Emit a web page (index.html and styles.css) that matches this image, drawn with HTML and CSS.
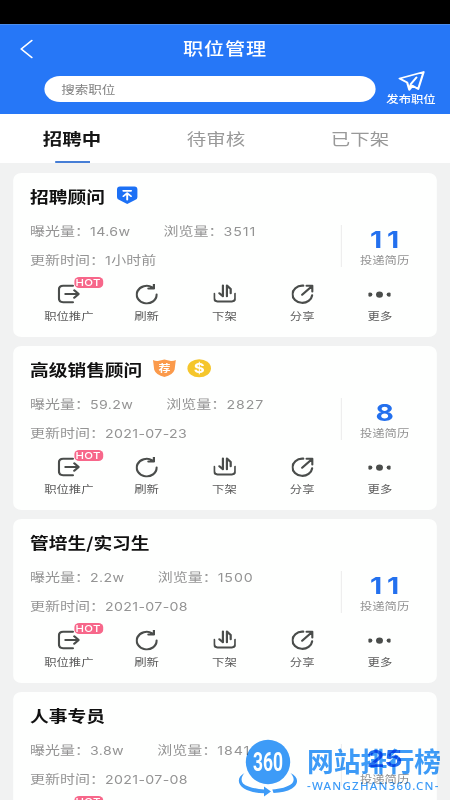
FILE: index.html
```html
<!DOCTYPE html>
<html lang="zh-CN">
<head>
<meta charset="utf-8">
<title>职位管理</title>
<link rel="stylesheet" href="styles.css">
</head>
<body>
<svg class="defs" aria-hidden="true">
  <symbol id="promote" viewBox="0 0 20 20" preserveAspectRatio="none"><path d="M13.800 1.800H5Q1.200 1.800 1.200 5.500v8.500q0 3.800 3.800 3.800h8.800M7 9.800h11.500M15 6.200l4 3.600-4 3.600"/></symbol>
  <symbol id="refresh" viewBox="0 0 20 20" preserveAspectRatio="none"><path d="M19 10.300A9 8.600 0 1 1 15 3.200M11.500 4.300h5V.3"/></symbol>
  <symbol id="offline" viewBox="0 0 20 20" preserveAspectRatio="none"><path d="M.5 9.500v4.500q0 3 3 3h13q3 0 3-3V9.500M8.400 1.500v10.500L5.200 9M12 12V1.500l3.400 3.400V9"/></symbol>
  <symbol id="share" viewBox="0 0 20 20" preserveAspectRatio="none"><path d="M10.500 1.600H9.500A8.900 8.400 0 1 0 18.500 11M9.500 10.500L18 2.500M13.500 1.800h5.200v5.500"/></symbol>
  <symbol id="more" viewBox="0 0 20 20" preserveAspectRatio="none"><g fill="currentColor" stroke="none"><circle cx="1.500" cy="10.300" r="2.100"/><circle cx="10" cy="10.300" r="3.100"/><circle cx="18.500" cy="10.300" r="2.100"/></g></symbol>
</svg>
<div class="screen">
  <div class="app">
    <div class="status"></div>
    <header class="header">
      <div class="bar">
        <svg class="back" viewBox="0 0 10 18"><path d="M9.500 .5L.7 9l8.800 8.500"/></svg>
        <h1>职位管理</h1>
      </div>
      <div class="searchrow">
        <div class="search">搜索职位</div>
        <div class="publish">
          <svg viewBox="0 0 22 20"><path d="M1 7.500L21 1l-4.500 17-4.700-3.300-2.700 4-1.800-7.200zM9.400 17.500l1-4.500L15 6.500"/></svg>
          <span>发布职位</span>
        </div>
      </div>
    </header>
    <nav class="tabs"><span class="active">招聘中</span><span>待审核</span><span>已下架</span></nav>
    <main class="list">
      <article class="card">
        <h2>招聘顾问<svg class="tag top" viewBox="0 0 18 19" preserveAspectRatio="none"><path fill="#1c70f5" d="M3 .5h12q2.500 0 2.500 3v8q0 2-2 3L9 18.500l-6.500-4q-2-1-2-3v-8q0-3 2.500-3z"/><path class="line" d="M5.700 5h6.600M9 14V8M5.800 10.500L9 7.300l3.200 3.200"/></svg></h2>
        <div class="info"><div class="meta"><p>曝光量：<b>14.6w</b><span class="views">浏览量：<b>3511</b></span></p><p>更新时间：<b>1</b>小时前</p></div><div class="count"><strong class="wide">11</strong><span>投递简历</span></div></div>
        <div class="actions"><div><svg><use href="#promote"/></svg><i>HOT</i><span>职位推广</span></div><div><svg><use href="#refresh"/></svg><span>刷新</span></div><div><svg><use href="#offline"/></svg><span>下架</span></div><div><svg><use href="#share"/></svg><span>分享</span></div><div><svg><use href="#more"/></svg><span>更多</span></div></div>
      </article>
      <article class="card">
        <h2>高级销售顾问<svg class="tag shield" viewBox="0 0 20 19" preserveAspectRatio="none"><path fill="#fb9a4b" d="M.5 1q2.500 1.500 5 .7L10 .5l4.500 1.200q2.500.8 5-.7l-1 10Q17 16.500 10 18.500 3 16.500 1.500 11z"/><text x="10" y="13">荐</text></svg><svg class="tag coin" viewBox="0 0 20 19" preserveAspectRatio="none"><ellipse cx="10" cy="9.500" rx="9.800" ry="9.300" fill="#f5c62c"/><text x="10" y="14.500">$</text></svg></h2>
        <div class="info"><div class="meta"><p>曝光量：<b>59.2w</b><span class="views">浏览量：<b>2827</b></span></p><p>更新时间：<b>2021-07-23</b></p></div><div class="count"><strong>8</strong><span>投递简历</span></div></div>
        <div class="actions"><div><svg><use href="#promote"/></svg><i>HOT</i><span>职位推广</span></div><div><svg><use href="#refresh"/></svg><span>刷新</span></div><div><svg><use href="#offline"/></svg><span>下架</span></div><div><svg><use href="#share"/></svg><span>分享</span></div><div><svg><use href="#more"/></svg><span>更多</span></div></div>
      </article>
      <article class="card">
        <h2>管培生/实习生</h2>
        <div class="info"><div class="meta"><p>曝光量：<b>2.2w</b><span class="views">浏览量：<b>1500</b></span></p><p>更新时间：<b>2021-07-08</b></p></div><div class="count"><strong class="wide">11</strong><span>投递简历</span></div></div>
        <div class="actions"><div><svg><use href="#promote"/></svg><i>HOT</i><span>职位推广</span></div><div><svg><use href="#refresh"/></svg><span>刷新</span></div><div><svg><use href="#offline"/></svg><span>下架</span></div><div><svg><use href="#share"/></svg><span>分享</span></div><div><svg><use href="#more"/></svg><span>更多</span></div></div>
      </article>
      <article class="card">
        <h2>人事专员</h2>
        <div class="info"><div class="meta"><p>曝光量：<b>3.8w</b><span class="views">浏览量：<b>1841</b></span></p><p>更新时间：<b>2021-07-08</b></p></div><div class="count"><strong>25</strong><span>投递简历</span></div></div>
        <div class="actions"><div><svg><use href="#promote"/></svg><i>HOT</i></div></div>
      </article>
    </main>
  </div>
  <div class="watermark">
    <svg viewBox="0 0 60 60">
      <circle cx="30" cy="24" r="22.200" fill="#3d9bf8"/>
      <path fill="#3d9bf8" d="M6.500 35C-1 39-1 46 6 50.500c6 3.500 13 4.500 20 4.700v3.300l7-5-7-5v3C18 51 9 49 5 45.500 2.500 42 3.500 38.500 6.500 35zM52.500 35c8.500 4 8.500 11 1.500 15.500-5 3-11 4.200-18.500 4.500l-1.200-3.500C42 51 50 49 54 45.500c3-3.500 1.500-7-1.500-10.500z"/>
      <text x="30" y="33" textLength="30" lengthAdjust="spacingAndGlyphs">360</text>
    </svg>
    <div class="brand"><div class="name">网站排行榜</div><div class="site">-WANGZHAN360.CN-</div></div>
  </div>
</div>
</body>
</html>
```
FILE: styles.css
```css
* { box-sizing: border-box; margin: 0; padding: 0; }
body { background: #f1f2f2; font-family: "Noto Sans CJK SC", sans-serif; }
.defs { position: absolute; width: 0; height: 0; }
.screen { position: relative; width: 450px; height: 800px; overflow: hidden; }
/* 375-unit wide layout, widened to fill the screen */
.app { width: 375px; height: 800px; transform: scaleX(1.2); transform-origin: 0 0; overflow: hidden; background: #f1f2f2; }
svg { fill: none; stroke: currentColor; stroke-linecap: round; stroke-linejoin: round; overflow: visible; display: block; }

.status { height: 24px; background: #000; }
.header { height: 89.5px; background: #2677f7; color: #fff; border-top: 1px solid #4b8eed; }
.bar { display: grid; grid-template-columns: 60px 1fr 60px; align-items: center; height: 47px; }
.back { width: 10px; height: 18px; margin-left: 17px; stroke-width: 1.5; }
h1 { font-size: 16.8px; font-weight: 500; letter-spacing: .7px; line-height: 24px; margin-top: -2px; text-align: center; }
.searchrow { display: flex; padding-left: 36.5px; }
.search { width: 276px; height: 26px; margin-top: 4px; padding-left: 14.5px; border-radius: 13px; background: #fff; color: #808080; font-size: 11.3px; line-height: 26px; }
.publish { width: 62px; display: flex; flex-direction: column; align-items: center; margin-left: -1px; }
.publish svg { width: 22px; height: 20px; stroke-width: 1.8; margin-top: -1px; }
.publish span { font-size: 10.3px; font-weight: 500; line-height: 16px; }

.tabs { height: 49.5px; display: grid; grid-template-columns: repeat(3, 120px); background: #fff; color: #999; font-size: 16.2px; line-height: 49px; text-align: center; }
.tabs .active { color: #161616; font-weight: 700; position: relative; }
.tabs .active::after { content: ""; position: absolute; left: 46px; bottom: 0; width: 28.5px; height: 2px; background: #467ed6; }

.list { padding: 10px 11px 0; display: grid; gap: 9px; }
.card { height: 164px; width: 353px; background: #fefffe; border-radius: 7px; padding: 13px 0 0 14px; }
h2 { height: 20px; display: flex; align-items: center; font-size: 15.6px; font-weight: 700; color: #111; line-height: 20px; }
.tag { height: 18.5px; flex: none; stroke: none; }
.tag.top { width: 18px; margin: -1px 0 0 9.5px; }
.tag .line { stroke: #fff; stroke-width: 1.6; }
.tag.shield { width: 20px; margin-left: 8.5px; margin-top: -1px; }
.tag.coin { width: 20px; margin-left: 8.5px; margin-top: -1px; }
.tag text { fill: #fff; text-anchor: middle; font-weight: 700; font-size: 10px; }
.tag.coin text { font-size: 14px; font-family: Inter, sans-serif; }

.info { display: flex; height: 68.5px; padding-top: 9.5px; }
.meta { width: 259px; color: #949494; font-size: 12.5px; line-height: 29px; white-space: nowrap; }
.meta p { height: 29px; }
.meta b { font: 400 11.8px/1 Inter, sans-serif; letter-spacing: .3px; }
.views { margin-left: 27.7px; }
.views b { letter-spacing: .8px; }
.count { height: 42px; margin-top: 9px; width: 72px; display: flex; flex-direction: column; align-items: center; border-left: 1px solid #eee; }
.count strong { font: 700 23.5px/28px Inter, sans-serif; color: #2370ee; margin-top: 1px; }
.count .wide { letter-spacing: 4px; margin-right: -4px; }
.count span { font-size: 10.3px; line-height: 12px; color: #929292; }

.actions { display: grid; grid-template-columns: repeat(5, 64.8px); padding-top: 9px; color: #4a4d4b; }
.actions > div { position: relative; display: flex; flex-direction: column; align-items: center; }
.actions svg { width: 18.5px; height: 20.5px; stroke-width: 2; }
.actions span { font-size: 10.3px; line-height: 14px; margin-top: 4.5px; color: #5b5b5b; }
.actions i { position: absolute; left: 36.5px; top: -7px; width: 24px; height: 11.5px; border-radius: 4px; background: #f7678a; color: #fff; font: 500 9.5px/12px Inter, sans-serif; text-align: center; letter-spacing: .3px; }

.watermark { position: absolute; left: 238px; top: 738px; display: flex; color: #3d9bf8; mix-blend-mode: multiply; }
.watermark svg { width: 60px; height: 60px; }
.watermark text { fill: #fff; stroke: none; text-anchor: middle; font: 700 26px Roboto, sans-serif; }
.watermark svg path, .watermark svg circle { stroke: none; }
.brand { margin-left: 9px; white-space: nowrap; }
.name { font-size: 26.8px; line-height: 34px; margin-top: 6px; font-weight: 700; }
.site { font: 500 11.5px/14px "Noto Sans", sans-serif; letter-spacing: 1.25px; margin-top: 1px; }
```
